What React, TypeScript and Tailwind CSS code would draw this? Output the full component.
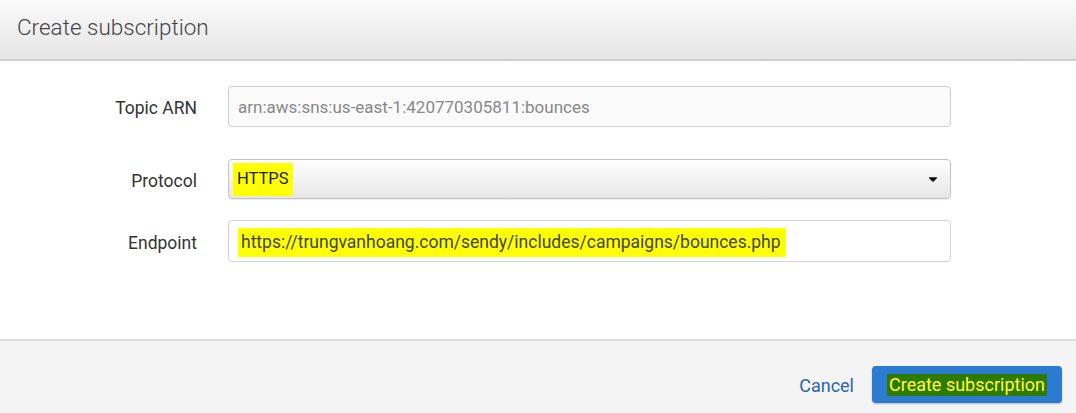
import { FaCaretDown } from 'react-icons/fa'

function Row({ label, children, className = '' }: { label: string; children: React.ReactNode; className?: string }) {
  return (
    <div className={`flex items-center ${className}`}>
      <div className="w-[197px] pt-[4px] text-right text-[17.5px] text-[#333]">{label}</div>
      <div className="ml-[31px] w-[723px]">{children}</div>
    </div>
  )
}

export default function App() {
  return (
    <div className="w-[1076px] h-[413px] flex flex-col bg-white font-['Roboto',sans-serif]">
      <div className="h-[61px] shrink-0 flex items-center px-[17px] bg-gradient-to-b from-[#fafafa] to-[#e5e5e5] border-b-2 border-[#cfcfcf]">
        <h1 className="text-[22.5px] font-light text-[#444] pb-[3px]">Create subscription</h1>
      </div>

      <div className="flex-1 pt-[25px]">
        <Row label="Topic ARN">
          <div className="h-[41px] flex items-center pt-[2px] px-[9px] rounded-[4px] border border-[#cdcdcd] bg-[#fbfbfb] text-[17px] text-[#888]">
            arn:aws:sns:us-east-1:420770305811:bounces
          </div>
        </Row>

        <Row label="Protocol" className="mt-[32px]">
          <div className="h-[40px] flex items-center justify-between pl-[4px] pr-[10px] rounded-[4px] border border-[#c4c4c4] bg-gradient-to-b from-white to-[#e6e6e6] shadow-[0_1px_1px_rgba(0,0,0,0.08)]">
            <span className="h-[33px] flex items-center px-[4px] bg-[#ffff00] text-[16.5px] text-[#222]">HTTPS</span>
            <FaCaretDown className="text-[#111] text-[14px]" />
          </div>
        </Row>

        <Row label="Endpoint" className="mt-[21px]">
          <div className="h-[42px] flex items-center px-[9px] rounded-[4px] border border-[#d2d2d2] bg-white">
            <span className="h-[29px] flex items-center pl-[3px] pr-[5px] bg-[#ffff00] text-[17.5px] text-[#444] mt-[3px]">
              https://trungvanhoang.com/sendy/includes/campaigns/bounces.php
            </span>
          </div>
        </Row>
      </div>

      <div className="h-[74px] shrink-0 flex items-start justify-end pt-[25px] pr-[14px] bg-[#f4f4f4] border-t-2 border-[#dcdcdc]">
        <a className="mt-[6px] text-[18px] text-[#2a65ad] cursor-pointer">Cancel</a>
        <button className="ml-[18px] w-[190px] h-[37px] flex items-center justify-center rounded-[4px] bg-[#2b7bd0] shadow-[0_1px_2px_rgba(0,0,0,0.25)]">
          <span className="h-[22px] flex items-center px-[2px] bg-[#2f7a00] text-[18px] text-[#ffff33]">Create subscription</span>
        </button>
      </div>
    </div>
  )
}
